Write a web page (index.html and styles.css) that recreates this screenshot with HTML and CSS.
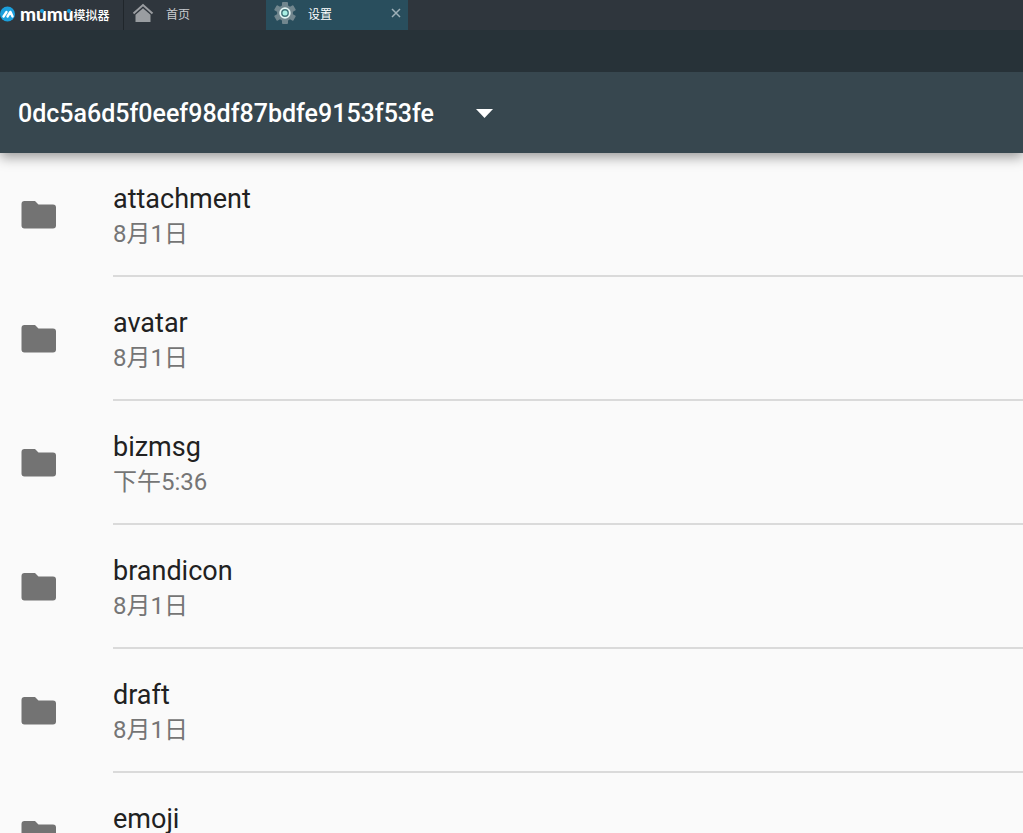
FILE: index.html
```html
<!DOCTYPE html>
<html lang="zh-CN">
<head>
    <meta charset="UTF-8">
    <meta name="viewport" content="width=device-width, initial-scale=1">
    <title>设置</title>
    <link rel="stylesheet" href="styles.css">
</head>
<body>
    <svg class="defs" width="0" height="0">
        <symbol id="folder" viewBox="0 0 36 30">
            <path d="M3.500 1h10.500l3.500 3.500h14.500a3 3 0 0 1 3 3V25.500a3 3 0 0 1-3 3H3.500a3 3 0 0 1-3-3V4a3 3 0 0 1 3-3z" fill="#737373"/>
        </symbol>
    </svg>

    <header class="tabs">
        <div class="brand">
            <svg width="18" height="18" viewBox="0 0 18 18">
                <circle cx="7.500" cy="9" r="7.500" fill="#1b9fdc"/>
                <path d="M3.500 11.500L6.500 7M7.500 11.500L10.300 7M10.500 7l2 4.500" fill="none" stroke="#fff" stroke-width="2.400" stroke-linecap="round"/>
            </svg>
            <span class="brand-name">m<span class="dotted">u</span>m<span class="dotted">u</span></span>
            <span class="brand-sub">模拟器</span>
        </div>
        <button class="tab home">
            <svg width="22" height="20" viewBox="0 0 22 20">
                <path d="M1.500 10.500L11 2l9.500 8.500" fill="none" stroke="#9a9da1" stroke-width="2"/>
                <path d="M11 5.200l7.500 6.600V19h-15v-7.200z" fill="#9a9da1"/>
            </svg>
            首页
        </button>
        <div class="tab active">
            <button class="tab-label">
                <svg width="22" height="22" viewBox="0 0 22 22">
                    <g fill="#71868e">
                        <circle cx="11" cy="11" r="8"/>
                        <rect x="8" y="0" width="6" height="22" rx="1"/>
                        <rect x="8" y="0" width="6" height="22" rx="1" transform="rotate(60 11 11)"/>
                        <rect x="8" y="0" width="6" height="22" rx="1" transform="rotate(120 11 11)"/>
                    </g>
                    <circle cx="11" cy="11" r="4.800" fill="#3f7379" stroke="#e3f5f3" stroke-width="1.800"/>
                    <circle cx="11" cy="11" r="2.500" fill="#a9f0e4"/>
                </svg>
                设置
            </button>
            <button class="close" aria-label="关闭">
                <svg width="10" height="10" viewBox="0 0 10 10">
                    <path d="M1 1l8 8M9 1L1 9" stroke="#9eb0b8" stroke-width="1.500"/>
                </svg>
            </button>
        </div>
    </header>

    <div class="statusbar"></div>

    <div class="toolbar">
        <button class="path">
            0dc5a6d5f0eef98df87bdfe9153f53fe
            <svg width="17" height="9" viewBox="0 0 17 9"><path d="M0 0h17L8.500 9z" fill="#fff"/></svg>
        </button>
    </div>

    <main class="files">
        <a class="row" href="#attachment">
            <svg class="icon"><use href="#folder"/></svg>
            <div class="info"><div class="name">attachment</div><div class="date">8月1日</div></div>
        </a>
        <a class="row" href="#avatar">
            <svg class="icon"><use href="#folder"/></svg>
            <div class="info"><div class="name">avatar</div><div class="date">8月1日</div></div>
        </a>
        <a class="row" href="#bizmsg">
            <svg class="icon"><use href="#folder"/></svg>
            <div class="info"><div class="name">bizmsg</div><div class="date">下午5:36</div></div>
        </a>
        <a class="row" href="#brandicon">
            <svg class="icon"><use href="#folder"/></svg>
            <div class="info"><div class="name">brandicon</div><div class="date">8月1日</div></div>
        </a>
        <a class="row" href="#draft">
            <svg class="icon"><use href="#folder"/></svg>
            <div class="info"><div class="name">draft</div><div class="date">8月1日</div></div>
        </a>
        <a class="row" href="#emoji">
            <svg class="icon"><use href="#folder"/></svg>
            <div class="info"><div class="name">emoji</div></div>
        </a>
    </main>
</body>
</html>
```
FILE: styles.css
```css
* {
    box-sizing: border-box;
}
body {
    margin: 0;
    height: 100vh;
    display: flex;
    flex-direction: column;
    overflow: hidden;
    font-family: Roboto, "Noto Sans CJK SC", sans-serif;
    background-color: #fafafa;
}
button {
    display: flex;
    align-items: center;
    padding: 0;
    border: 0;
    background: none;
    color: inherit;
    font: inherit;
    cursor: pointer;
}
.defs {
    position: absolute;
}

/* Window tabs */
.tabs {
    display: flex;
    flex: none;
    height: 30px;
    background-color: #2f363d;
    color: #c9ccd0;
    font-family: "Noto Sans CJK SC", sans-serif;
    font-size: 12px;
}
.brand {
    display: flex;
    align-items: center;
    width: 124px;
    padding-bottom: 2px;
    border-right: 1px solid #20262b;
    color: #fff;
}
.brand-name {
    margin-left: 2px;
    font-family: Lato, sans-serif;
    font-size: 19px;
    font-weight: 900;
    line-height: 20px;
}
.dotted {
    position: relative;
}
.dotted::after {
    content: "";
    position: absolute;
    top: 7px;
    left: 4px;
    width: 4px;
    height: 4px;
    border-radius: 50%;
    background-color: #1b9fdc;
}
.brand-sub {
    font-weight: 500;
}
.tab {
    width: 142px;
    height: 30px;
    padding: 0 7px 4px 8px;
}
.home {
    gap: 12px;
}
.active {
    display: flex;
    align-items: center;
    justify-content: space-between;
    background-color: #294e5d;
    color: #fff;
}
.tab-label {
    gap: 12px;
}

/* App header */
.statusbar {
    position: relative;
    z-index: 1;
    flex: none;
    height: 42px;
    background-color: #273238;
}
.toolbar {
    position: relative;
    display: flex;
    flex: none;
    height: 81px;
    padding: 2px 18px 0;
    background-color: #37474f;
    box-shadow: 0 4px 12px rgba(0, 0, 0, 0.4);
}
.path {
    gap: 42px;
    color: #fff;
    font-size: 25px;
    font-weight: 500;
}

/* File list */
.files {
    flex: 1;
    min-height: 0;
    overflow: hidden;
}
.row {
    display: flex;
    height: 124px;
    padding-left: 21px;
    color: #212121;
    text-decoration: none;
}
.icon {
    flex: none;
    width: 36px;
    height: 30px;
    margin: 47px 56px 0 0;
}
.info {
    flex: 1;
    padding-top: 28px;
    border-bottom: 2px solid #dadada;
}
.name {
    font-size: 27px;
    line-height: 36px;
}
.date {
    color: #757575;
    font-size: 24px;
    line-height: 34px;
}
```
